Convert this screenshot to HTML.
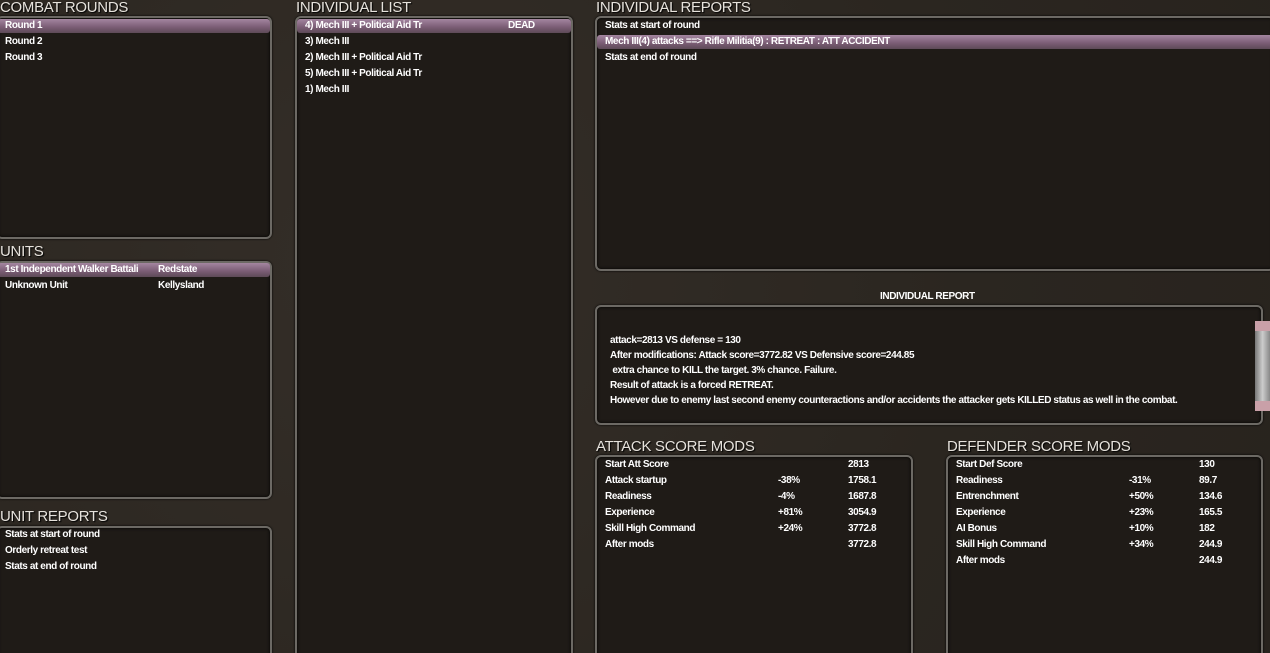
<!DOCTYPE html><html><head><style>
*{margin:0;padding:0;box-sizing:border-box}
html{width:1270px;height:653px;overflow:hidden}
body{width:1270px;height:653px;overflow:hidden;background:#2d2822;background-image:radial-gradient(circle at 30% 40%,#342e28 0,#2b2620 60%,#28231e 100%);font-family:"Liberation Sans Narrow","Liberation Sans",sans-serif;color:#fff;position:relative}
.t{position:absolute;font-size:15px;color:#e6e2dc;letter-spacing:-0.3px;line-height:15px;text-shadow:1px 1px 1px #000}
.p{position:absolute;background:#1f1b17;border:2px solid #6c6964;border-radius:6px;box-shadow:inset 0 0 3px #000,0 0 2px #000}
.r{position:absolute;left:0;right:0;height:14px;font-size:10px;font-weight:bold;line-height:14px;white-space:nowrap;letter-spacing:-0.4px}
.h{background:linear-gradient(#a486a0,#7a5c74 60%,#5e4a58);border-radius:3px}
.r span{position:absolute}
.txt{position:absolute;font-size:10px;font-weight:bold;letter-spacing:-0.4px;line-height:15px;white-space:nowrap}
</style></head><body>
<div class="t" style="left:0;top:0">COMBAT ROUNDS</div>
<div class="p" style="left:-4px;top:16px;width:276px;height:223px">
<div class="r h" style="top:1px"><span style="left:7px">Round 1</span></div>
<div class="r" style="top:17px"><span style="left:7px">Round 2</span></div>
<div class="r" style="top:33px"><span style="left:7px">Round 3</span></div></div>
<div class="t" style="left:0;top:244px">UNITS</div>
<div class="p" style="left:-4px;top:261px;width:276px;height:238px">
<div class="r h" style="top:0px"><span style="left:7px">1st Independent Walker Battali</span><span style="left:160px">Redstate</span></div>
<div class="r" style="top:16px"><span style="left:7px">Unknown Unit</span><span style="left:160px">Kellysland</span></div></div>
<div class="t" style="left:0;top:509px">UNIT REPORTS</div>
<div class="p" style="left:-4px;top:526px;width:276px;height:140px">
<div class="r" style="top:0px"><span style="left:7px">Stats at start of round</span></div>
<div class="r" style="top:16px"><span style="left:7px">Orderly retreat test</span></div>
<div class="r" style="top:32px"><span style="left:7px">Stats at end of round</span></div></div>

<div class="t" style="left:296px;top:0">INDIVIDUAL LIST</div>
<div class="p" style="left:295px;top:16px;width:278px;height:650px">
<div class="r h" style="top:1px"><span style="left:8px">4) Mech III + Political Aid Tr</span><span style="left:211px">DEAD</span></div>
<div class="r" style="top:17px"><span style="left:8px">3) Mech III</span></div>
<div class="r" style="top:33px"><span style="left:8px">2) Mech III + Political Aid Tr</span></div>
<div class="r" style="top:49px"><span style="left:8px">5) Mech III + Political Aid Tr</span></div>
<div class="r" style="top:65px"><span style="left:8px">1) Mech III</span></div></div>

<div class="t" style="left:596px;top:0">INDIVIDUAL REPORTS</div>
<div class="p" style="left:595px;top:16px;width:680px;height:255px">
<div class="r" style="top:1px"><span style="left:8px">Stats at start of round</span></div>
<div class="r h" style="top:17px"><span style="left:8px">Mech III(4) attacks ==&gt; Rifle Militia(9) : RETREAT : ATT ACCIDENT</span></div>
<div class="r" style="top:33px"><span style="left:8px">Stats at end of round</span></div></div>

<div class="txt" style="left:880px;top:289px">INDIVIDUAL REPORT</div>
<div class="p" style="left:595px;top:305px;width:668px;height:120px">
<div class="txt" style="left:13px;top:26px">attack=2813 VS defense = 130<br>After modifications: Attack score=3772.82 VS Defensive score=244.85<br>&nbsp;extra chance to KILL the target. 3% chance. Failure.<br>Result of attack is a forced RETREAT.<br>However due to enemy last second enemy counteractions and/or accidents the attacker gets KILLED status as well in the combat.</div></div>
<div style="position:absolute;left:1255px;top:321px;width:15px;height:90px;background:linear-gradient(90deg,#777,#ccc,#888);border-radius:2px"><div style="height:10px;background:#c9a0a8"></div><div style="position:absolute;bottom:0;width:15px;height:10px;background:#c9a0a8"></div></div>

<div class="t" style="left:596px;top:439px">ATTACK SCORE MODS</div>
<div class="p" style="left:595px;top:455px;width:318px;height:210px">
<div class="r" style="top:1px"><span style="left:8px">Start Att Score</span><span style="left:251px">2813</span></div>
<div class="r" style="top:17px"><span style="left:8px">Attack startup</span><span style="left:181px">-38%</span><span style="left:251px">1758.1</span></div>
<div class="r" style="top:33px"><span style="left:8px">Readiness</span><span style="left:181px">-4%</span><span style="left:251px">1687.8</span></div>
<div class="r" style="top:49px"><span style="left:8px">Experience</span><span style="left:181px">+81%</span><span style="left:251px">3054.9</span></div>
<div class="r" style="top:65px"><span style="left:8px">Skill High Command</span><span style="left:181px">+24%</span><span style="left:251px">3772.8</span></div>
<div class="r" style="top:81px"><span style="left:8px">After mods</span><span style="left:251px">3772.8</span></div></div>

<div class="t" style="left:947px;top:439px">DEFENDER SCORE MODS</div>
<div class="p" style="left:946px;top:455px;width:317px;height:210px">
<div class="r" style="top:1px"><span style="left:8px">Start Def Score</span><span style="left:251px">130</span></div>
<div class="r" style="top:17px"><span style="left:8px">Readiness</span><span style="left:181px">-31%</span><span style="left:251px">89.7</span></div>
<div class="r" style="top:33px"><span style="left:8px">Entrenchment</span><span style="left:181px">+50%</span><span style="left:251px">134.6</span></div>
<div class="r" style="top:49px"><span style="left:8px">Experience</span><span style="left:181px">+23%</span><span style="left:251px">165.5</span></div>
<div class="r" style="top:65px"><span style="left:8px">AI Bonus</span><span style="left:181px">+10%</span><span style="left:251px">182</span></div>
<div class="r" style="top:81px"><span style="left:8px">Skill High Command</span><span style="left:181px">+34%</span><span style="left:251px">244.9</span></div>
<div class="r" style="top:97px"><span style="left:8px">After mods</span><span style="left:251px">244.9</span></div></div>
</body></html>
